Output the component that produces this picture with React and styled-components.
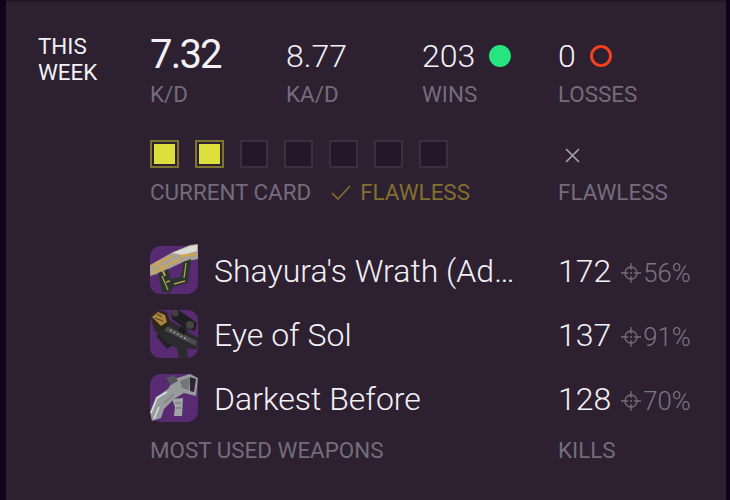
import React from 'react';
import styled, { createGlobalStyle } from 'styled-components';

const GlobalStyle = createGlobalStyle`
  html, body {
    margin: 0;
    height: 100%;
    overflow: hidden;
    background: #10031c;
    font-family: Roboto, "Liberation Sans", sans-serif;
  }
`;

const Card = styled.main`
  box-sizing: border-box;
  height: 500px;
  margin: 0 4px 0 6px;
  padding: 32px 32px 0;
  display: grid;
  grid-template-columns: 112px 1fr;
  background: #2c2031;
  border-top: 2px solid #231729;
  color: #f4f1f5;
`;

const Heading = styled.h2`
  margin: -1px 0 0;
  font-size: 22.4px;
  font-weight: 400;
  line-height: 26px;
`;

const Body = styled.div`
  display: flex;
  flex-direction: column;
`;

const StatRow = styled.div`
  display: grid;
  grid-template-columns: repeat(4, 136px);
`;

const Value = styled.div`
  box-sizing: border-box;
  display: flex;
  align-items: center;
  gap: 14px;
  height: 44px;
  margin-bottom: 3px;
  padding-bottom: ${p => (p.$big ? '3px' : '0')};
  font-size: ${p => (p.$big ? '40px' : '32px')};
  font-weight: ${p => (p.$big ? 400 : 300)};
  letter-spacing: ${p => (p.$big ? '-1.8px' : '0')};
  line-height: 44px;
`;

const Label = styled.div`
  color: ${p => (p.$gold ? '#83702e' : '#756c7b')};
  font-size: 22.4px;
  line-height: 26px;
  white-space: nowrap;
`;

const Dot = styled.span`
  box-sizing: border-box;
  width: 22px;
  height: 22px;
  border-radius: 50%;
  background: ${p => (p.$hollow ? 'transparent' : '#26e57f')};
  border: ${p => (p.$hollow ? '3px solid #f5401f' : 'none')};
`;

const CardRow = styled.div`
  display: grid;
  grid-template-columns: 408px 136px;
  margin-top: 33px;
`;

const Squares = styled.div`
  display: flex;
  gap: 16px;
  height: 28px;
  margin-bottom: 11px;
`;

const Square = styled.span`
  box-sizing: border-box;
  width: 28.8px;
  height: 28px;
  padding: 2px;
  border: 2px solid ${p => (p.$on ? '#7e7630' : '#3a2e40')};
  background: ${p => (p.$on ? '#dde03c' : '#231729')};
  background-clip: ${p => (p.$on ? 'content-box' : 'padding-box')};
`;

const CardLabels = styled.div`
  display: flex;
  align-items: center;
  gap: 20px;
`;

const FlawlessTag = styled.div`
  display: flex;
  align-items: center;
  gap: 9px;
`;

const CrossBox = styled.div`
  box-sizing: border-box;
  display: flex;
  align-items: center;
  height: 28px;
  margin-bottom: 11px;
  padding: 3px 0 0 7px;
  color: #a7a1ab;
`;

const Weapons = styled.div`
  display: flex;
  flex-direction: column;
  gap: 16px;
  margin-top: 41px;
`;

const WeaponRow = styled.div`
  display: grid;
  grid-template-columns: 408px 136px;
  align-items: center;
  height: 48px;
`;

const WeaponName = styled.div`
  display: flex;
  align-items: center;
  gap: 16px;
  font-size: 32px;
  font-weight: 300;
  white-space: nowrap;

  span {
    padding-top: 2px;
  }
`;

const Kills = styled.div`
  display: flex;
  align-items: center;
  padding-top: 2px;
  font-size: 32px;
  font-weight: 300;
  white-space: nowrap;
`;

const Accuracy = styled.span`
  display: flex;
  align-items: center;
  gap: 2px;
  margin-left: 10px;
  padding-top: 3px;
  color: #7d7483;
  font-size: 25.6px;
  font-weight: 300;
`;

const Footer = styled.div`
  display: grid;
  grid-template-columns: 408px 136px;
  margin-top: 15px;
`;

const IconBox = styled.svg`
  flex: none;
  display: block;
  overflow: visible;
  filter: blur(0.35px);
`;

const Shayura = () => (
  <IconBox width="48" height="48" viewBox="0 0 48 48">
    <rect width="48" height="48" rx="10" fill="#572a72" />
    <path d="M0 19 L23 6 L40 -1 L48 -2 L48 13 L33 16 L10 27 L0 30 Z" fill="#a9a292" />
    <path d="M22 7 L40 0 L47 -1 L47 5 L33 9 Z" fill="#dcdad4" />
    <path d="M1 21 L22 10 M2 27 L26 15 M8 15 L12 25 M30 10 L46 8 M14 21 L30 13" stroke="#d3a544" strokeWidth="1.8" fill="none" />
    <path d="M33 16 L41 13 L38 37 L23 41 L20 47 L12 46 L8 27 L18 23 L21 33 L31 31 Z" fill="#2b3530" />
    <path d="M12 30 L18 44 M16 36 L20 35 M24 38 L35 35 M36 17 L34 32" stroke="#b59b4d" strokeWidth="1.3" fill="none" />
    <path d="M13 25 L15 30" stroke="#d3a544" strokeWidth="2" fill="none" />
  </IconBox>
);

const EyeOfSol = () => (
  <IconBox width="48" height="48" viewBox="0 0 48 48">
    <rect width="48" height="48" rx="10" fill="#572a72" />
    <path d="M6 26 L17 19 L27 32 L17 39 Z" fill="#232224" />
    <path d="M2 12 L18 9 L48 28 L47 40 L37 38 L38 48 L29 48 L27 38 L17 33 L4 20 Z" fill="#2b2a2c" />
    <path d="M13 14 L47 31 L46 36 L11 19 Z" fill="#4b4a4d" />
    <path d="M20 20 L38 30" stroke="#a09fa1" strokeWidth="1.6" strokeDasharray="2 2" fill="none" />
    <path d="M0 6 L7 0 L17 2 L20 13 L14 21 L4 17 Z" fill="#2d261d" />
    <path d="M2 7 L8 2 L15 5 L17 12 L11 16 L6 11 Z" fill="#a8853a" />
    <path d="M7 4 L12 7 M5 8 L13 11" stroke="#5a4520" strokeWidth="1.2" fill="none" />
    <path d="M21 3 L27 -1 L47 13 L45 21 L36 19 L22 9 Z" fill="#201e20" />
    <circle cx="25" cy="3" r="3.5" fill="#403e41" />
    <circle cx="40" cy="15" r="4" fill="#454346" />
    <path d="M31 16 L37 20 L34 25 L28 21 Z" fill="#1d1c1e" />
  </IconBox>
);

const DarkestBefore = () => (
  <IconBox width="48" height="48" viewBox="0 0 48 48">
    <rect width="48" height="48" rx="10" fill="#572a72" />
    <path d="M22 25 L33 24 L32 42 L24 42 L25 33 Z" fill="#a3a6a5" />
    <path d="M0 38 L6 23 L18 15 L24 5 L40 0 L48 4 L46 22 L34 19 L24 25 L14 35 L11 44 L2 47 Z" fill="#989b9b" />
    <path d="M40 3 L46 5 L44 18 L40 17 Z" fill="#2a2730" />
    <path d="M30 7 L40 3 L39 16 L32 14 Z" fill="#74777a" />
    <path d="M16 4 L24 1 L28 7 L21 11 Z" fill="#55565a" />
    <path d="M1 39 L7 24 L17 18 M4 45 L9 33" stroke="#d6dfe2" strokeWidth="1.5" fill="none" />
    <path d="M14 29 L24 20 M25 29 L31 29 M26 34 L31 34" stroke="#7d8081" strokeWidth="1.4" fill="none" />
  </IconBox>
);

const Check = () => (
  <svg width="20" height="16" viewBox="0 0 20 16">
    <path d="M1 9 L7 15 L19 2" stroke="#83702e" strokeWidth="1.6" fill="none" />
  </svg>
);

const Cross = () => (
  <svg width="15" height="15" viewBox="0 0 15 15">
    <path d="M1 1 L14 14 M14 1 L1 14" stroke="currentColor" strokeWidth="1.7" fill="none" />
  </svg>
);

const Crosshair = () => (
  <svg width="20" height="20" viewBox="0 0 20 20">
    <circle cx="10" cy="10" r="6" stroke="#756c7b" strokeWidth="1.3" fill="none" />
    <path d="M0 10 H7 M13 10 H20 M10 0 V7 M10 13 V20" stroke="#756c7b" strokeWidth="1.3" fill="none" />
    <circle cx="10" cy="10" r="1" fill="#756c7b" />
  </svg>
);

const weapons = [
  { name: "Shayura's Wrath (Ad…", kills: 172, acc: '56%', Icon: Shayura },
  { name: 'Eye of Sol', kills: 137, acc: '91%', Icon: EyeOfSol },
  { name: 'Darkest Before', kills: 128, acc: '70%', Icon: DarkestBefore },
];

function App() {
  return (
    <>
      <GlobalStyle />
      <Card>
        <Heading>THIS<br />WEEK</Heading>
        <Body>
          <StatRow>
            <div>
              <Value $big>7.32</Value>
              <Label>K/D</Label>
            </div>
            <div>
              <Value>8.77</Value>
              <Label>KA/D</Label>
            </div>
            <div>
              <Value>203 <Dot /></Value>
              <Label>WINS</Label>
            </div>
            <div>
              <Value>0 <Dot $hollow /></Value>
              <Label>LOSSES</Label>
            </div>
          </StatRow>

          <CardRow>
            <div>
              <Squares>
                {[true, true, false, false, false, false, false].map((on, i) => (
                  <Square key={i} $on={on} />
                ))}
              </Squares>
              <CardLabels>
                <Label>CURRENT CARD</Label>
                <FlawlessTag>
                  <Check />
                  <Label $gold>FLAWLESS</Label>
                </FlawlessTag>
              </CardLabels>
            </div>
            <div>
              <CrossBox><Cross /></CrossBox>
              <Label>FLAWLESS</Label>
            </div>
          </CardRow>

          <Weapons>
            {weapons.map(({ name, kills, acc, Icon }) => (
              <WeaponRow key={name}>
                <WeaponName>
                  <Icon />
                  <span>{name}</span>
                </WeaponName>
                <Kills>
                  {kills}
                  <Accuracy><Crosshair />{acc}</Accuracy>
                </Kills>
              </WeaponRow>
            ))}
          </Weapons>

          <Footer>
            <Label>MOST USED WEAPONS</Label>
            <Label>KILLS</Label>
          </Footer>
        </Body>
      </Card>
    </>
  );
}

export default App;
